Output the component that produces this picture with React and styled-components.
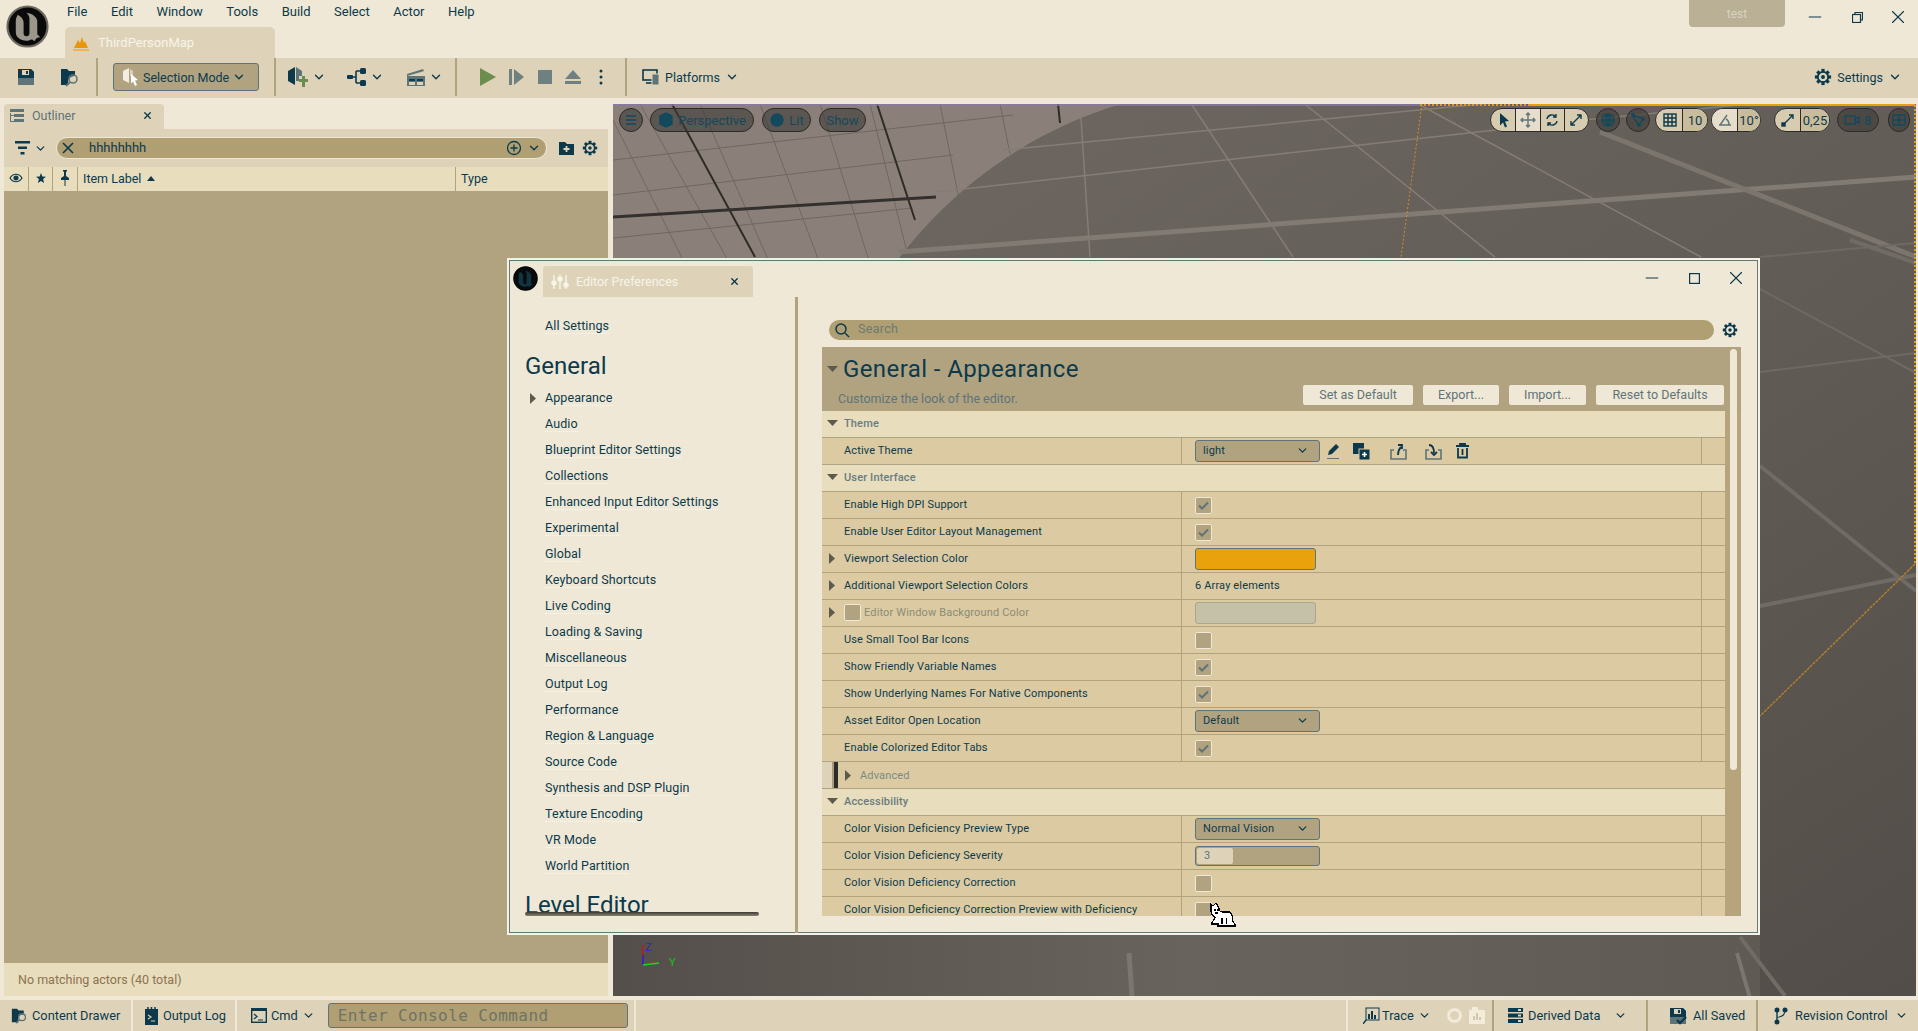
import React from "react";
import styled, { createGlobalStyle } from "styled-components";
import { ChevronDown, Minus, X } from "lucide-react";

const INK = "#0c3a4c";
const SLATE = "#5f7478";
const CREAM = "#efe8d6";
const SAND = "#ded3b8";
const PALE = "#e8ddbd";
const ROW = "#dbcaa2";
const KHAKI = "#b1a380";
const FIELD = "#af9f73";

const GlobalStyle = createGlobalStyle`
  html, body { margin: 0; padding: 0; overflow: hidden; background: ${CREAM}; }
  * { box-sizing: border-box; }
  body { font-family: Roboto, "Liberation Sans", sans-serif; color: ${INK}; }
`;

const Page = styled.div`
  position: relative;
  width: 1918px;
  height: 1031px;
  display: flex;
  flex-direction: column;
  overflow: hidden;
`;

const Nudge = styled.span`
  display: inline-flex;
  margin-left: ${(p) => p.$l || 0}px;
  margin-right: ${(p) => p.$r || 0}px;
`;

/* ---------- icons ---------- */

const Chevron = ({ size = 14, color = INK }) => <ChevronDown size={size} color={color} strokeWidth={2.4} />;

const GearIcon = ({ size = 18, color = INK }) => (
  <svg width={size} height={size} viewBox="0 0 20 20">
    <g fill={color}>
      {[0, 45, 90, 135, 180, 225, 270, 315].map((a) => (
        <rect key={a} x="8.2" y="1" width="3.6" height="4" transform={`rotate(${a} 10 10)`} />
      ))}
    </g>
    <circle cx="10" cy="10" r="5.8" fill="none" stroke={color} strokeWidth="2" />
    <circle cx="10" cy="10" r="2.2" fill={color} />
  </svg>
);

const UnrealMark = ({ size, ring, bright }) => (
  <svg width={size} height={size} viewBox="0 0 44 44">
    <circle cx="22" cy="22" r="20.5" fill="#0a0a0a" stroke={ring} strokeWidth="2.2" />
    <path
      d="M12 10C16 12 18 15 18 18V29C18 31 19 32 21 32C23 32 24 31 24 29V14C24 12 23 10 21 8C27 9 31 12 32 16V30L35 33C32 33 31 34 29 37C27 35 26 35 24 36C22 37 16 37 12 33C10 31 10 28 10 26V16C10 14 11 12 12 10Z"
      fill={bright}
    />
  </svg>
);

const SaveIcon = ({ check }) => (
  <svg width="18" height="18" viewBox="0 0 18 18">
    <path d="M1 1h13l3 3v13H1z" fill={SLATE} />
    <path d="M1 1h13l3 3v6H1z" fill={INK} />
    <rect x="5" y="2" width="7" height="5" fill={SAND} />
    <rect x="9" y="3" width="2" height="3" fill={INK} />
    {check && <path d="M8 13l3 3 6-6" fill="none" stroke={INK} strokeWidth="2.4" />}
  </svg>
);

const FolderSearchIcon = ({ size = 20 }) => (
  <svg width={size} height={size} viewBox="0 0 20 20">
    <path d="M1 2h6l2 2h6v5a6 6 0 0 0-6 9H1z" fill={INK} />
    <circle cx="13" cy="12" r="4" fill="none" stroke={SLATE} strokeWidth="1.6" />
    <path d="M10 15l-4 4" stroke={SLATE} strokeWidth="1.8" />
  </svg>
);

const SelectionIcon = () => (
  <svg width="18" height="20" viewBox="0 0 18 20">
    <path d="M7 1L1 4v9l6 3z" fill="#f3eee0" />
    <path d="M8 2l3 2v6l-3-1z" fill="#d8d2c2" />
    <path d="M9 7l7 6-3 .5 2 4.5-2 1-2-4.500-2 2z" fill="#fff" />
  </svg>
);

const AddActorIcon = () => (
  <svg width="22" height="24" viewBox="0 0 22 24">
    <path d="M8 2L1 6v10l7 4z" fill={INK} />
    <path d="M9 2l6 4v5h-3v5H9z" fill={SLATE} />
    <path d="M12 14h3v-3h3v3h3v3h-3v5h-3v-5h-3z" fill="#6b8e4e" />
  </svg>
);

const BlueprintIcon = () => (
  <svg width="20" height="20" viewBox="0 0 20 20">
    <path d="M5 10h4M9 4v12M9 4h4M9 16h4" stroke={INK} strokeWidth="1.6" fill="none" />
    <rect x="0" y="8" width="6" height="4" rx="1" fill={INK} />
    <rect x="13" y="1" width="6" height="6" rx="1.500" fill={INK} />
    <rect x="13" y="13" width="6" height="6" rx="1.500" fill={INK} />
  </svg>
);

const ClapperIcon = () => (
  <svg width="20" height="20" viewBox="0 0 20 20">
    <path d="M1 7l16-5 1 2-4 1.300L1 9z" fill={SLATE} />
    <path d="M1 9h18v10H1z" fill={SLATE} />
    <path d="M3 12h6v2H3zM11 12h6v2h-6z" fill={INK} />
    <path d="M3 15h6v3H3zM11 15h6v3h-6z" fill={SAND} />
  </svg>
);

const PlatformsIcon = () => (
  <svg width="18" height="18" viewBox="0 0 18 18">
    <rect x="1" y="2" width="14" height="10" fill="none" stroke={INK} strokeWidth="1.6" />
    <path d="M4 15h8" stroke={INK} strokeWidth="1.600" />
    <rect x="10" y="6" width="7" height="11" rx="1" fill={SLATE} stroke={SAND} />
  </svg>
);

const OutlinerIcon = () => (
  <svg width="16" height="16" viewBox="0 0 16 16" fill={SLATE}>
    <rect x="1" y="1" width="14" height="3" />
    <rect x="5" y="6" width="10" height="3" />
    <rect x="5" y="11" width="10" height="3" />
    <path d="M1 5h1v8h3v1H1zM2 7h3v1H2z" />
  </svg>
);

const TriRight = () => (
  <svg width="8" height="11" viewBox="0 0 8 11"><path d="M1 0l6 5.500-6 5.500z" fill="#5d5a4e" /></svg>
);
const TriDown = () => (
  <svg width="11" height="8" viewBox="0 0 11 8"><path d="M0 1h11L5.500 7z" fill="#5d5a4e" /></svg>
);

const CatCursor = () => (
  <svg width="30" height="26" viewBox="0 0 30 26" shapeRendering="crispEdges">
    <path
      d="M1 3l2 2 3-3 2 3 2 5 2 1h8l2 3 1 7 2 2v2H8v-2H2v-2l2-2 1-3-3-2-1-4z"
      fill="#fff"
      stroke="#000"
      strokeWidth="1.300"
    />
    <path d="M4 9h2M7 9h2M5 12h3M12 17v6M17 17l-1 6" stroke="#000" strokeWidth="1.100" fill="none" />
  </svg>
);

/* ---------- title bar ---------- */

const TitleBar = styled.header`
  height: 58px;
  display: flex;
  flex: none;
  background: ${CREAM};
`;

const LogoSlot = styled.div`
  width: 65px;
  flex: none;
  padding: 5px 0 0 6px;
`;

const TitleMiddle = styled.div`
  display: flex;
  flex-direction: column;
`;

const MenuRow = styled.nav`
  height: 27px;
  display: flex;
  align-items: flex-start;
  padding: 4px 0 0 2px;
`;

const MenuItem = styled.span`
  font-size: 13px;
  line-height: 16px;
  margin-right: 23.500px;
`;

const MapTab = styled.div`
  width: 210px;
  height: 31px;
  background: ${SAND};
  border-radius: 5px 5px 0 0;
  display: flex;
  align-items: center;
  gap: 9px;
  padding-left: 8px;
  color: #f7f3e8;
  font-size: 13px;
`;

const WindowArea = styled.div`
  margin-left: auto;
  display: flex;
  align-items: flex-start;
`;

const TestButton = styled.div`
  width: 96px;
  height: 27px;
  margin-right: 9px;
  background: #b9b096;
  border-radius: 0 0 4px 4px;
  color: #d8d2c0;
  font-size: 12px;
  display: flex;
  align-items: center;
  justify-content: center;
`;

const CtrlButton = styled.div`
  width: ${(p) => p.$w || 42}px;
  height: 34px;
  display: flex;
  align-items: center;
  justify-content: center;
`;

/* ---------- main toolbar ---------- */

const ToolBar = styled.div`
  height: 40px;
  flex: none;
  background: ${SAND};
  display: flex;
  align-items: center;
  padding-bottom: 2px;
`;

const ToolSlot = styled.div`
  width: ${(p) => p.$w}px;
  height: 100%;
  flex: none;
  display: flex;
  align-items: center;
  justify-content: ${(p) => (p.$pad ? "flex-start" : "center")};
  padding-left: ${(p) => p.$pad || 0}px;
  gap: ${(p) => p.$gap || 3}px;
  font-size: 12.500px;
`;

const ToolSep = styled.div`
  width: 2px;
  height: 38px;
  flex: none;
  background: ${KHAKI};
`;

const SelectionButton = styled.div`
  width: 146px;
  height: 28px;
  flex: none;
  margin: 0 15px;
  background: ${KHAKI};
  border: 1px solid ${SLATE};
  border-radius: 3px;
  display: flex;
  align-items: center;
  gap: 3px;
  padding-left: 8px;
  font-size: 12.500px;
`;

const SettingsSlot = styled.div`
  margin-left: auto;
  padding-right: 16px;
  display: flex;
  align-items: center;
  gap: 5px;
  font-size: 12.500px;
`;

/* ---------- main area ---------- */

const MainArea = styled.div`
  flex: 1;
  min-height: 0;
  display: flex;
  gap: 5px;
  padding: 6px 2px 4px 4px;
`;

const Outliner = styled.section`
  width: 604px;
  flex: none;
  display: flex;
  flex-direction: column;
`;

const PanelTab = styled.div`
  width: 160px;
  height: 25px;
  flex: none;
  background: ${SAND};
  border-radius: 4px 4px 0 0;
  display: flex;
  align-items: center;
  padding: 0 11px 2px 5px;
  gap: 7px;
  color: ${SLATE};
  font-size: 12.500px;
  & > :last-child { margin-left: auto; }
`;

const FilterBar = styled.div`
  height: 38px;
  flex: none;
  background: ${SAND};
  display: flex;
  align-items: center;
  padding: 0 8px 0 11px;
  gap: 4px;
`;

const FilterSearch = styled.div`
  width: 491px;
  height: 22px;
  margin: 0 7.500px 0 5px;
  background: ${FIELD};
  border: 1px solid ${CREAM};
  border-radius: 11px;
  display: flex;
  align-items: center;
  gap: 5px;
  font-size: 13px;
  padding: 0 5px 0 2px;
  & > :nth-child(2) { margin-left: 7px; flex: 1; padding-bottom: 2px; }
`;

const ColumnHeader = styled.div`
  height: 24px;
  flex: none;
  background: ${PALE};
  display: flex;
  align-items: stretch;
  font-size: 12.500px;
`;

const HeadCell = styled.div`
  width: ${(p) => (p.$w ? `${p.$w}px` : "auto")};
  flex: ${(p) => (p.$w ? "none" : 1)};
  display: flex;
  align-items: center;
  gap: 6px;
  justify-content: ${(p) => (p.$center ? "center" : "flex-start")};
  padding: 0 0 2px ${(p) => (p.$center ? 0 : 5)}px;
  border-right: 1px solid ${(p) => (p.$last ? "transparent" : KHAKI)};
`;

const TreeBody = styled.div`
  flex: 1;
  background: ${KHAKI};
`;

const PanelFooter = styled.div`
  height: 33px;
  flex: none;
  background: ${PALE};
  color: #8c7350;
  font-size: 12.500px;
  display: flex;
  align-items: center;
  padding-left: 14px;
`;

/* ---------- viewport ---------- */

const Viewport = styled.section`
  position: relative;
  flex: 1;
  overflow: hidden;
  background: #8a7f78;
`;

const Scene = styled.svg`
  display: block;
  width: 100%;
  height: 100%;
`;

const OverlayBar = styled.div`
  position: absolute;
  top: 4px;
  left: 6px;
  right: 6px;
  display: flex;
  align-items: center;
`;

const Pill = styled.div`
  height: 24px;
  width: ${(p) => p.$w}px;
  margin-left: ${(p) => p.$ml || 0}px;
  flex: none;
  border-radius: 12px;
  border: 1px solid #2d2b28;
  background: ${(p) => (p.$light ? "#d7ccaf" : "rgba(62,60,57,.62)")};
  color: #12495c;
  font-size: 13px;
  display: flex;
  align-items: center;
  justify-content: center;
  gap: ${(p) => (p.$light ? 0 : 4)}px;
  overflow: hidden;
`;

const PillCell = styled.div`
  flex: ${(p) => (p.$w ? "none" : 1)};
  width: ${(p) => (p.$w ? `${p.$w}px` : "auto")};
  height: 100%;
  display: flex;
  align-items: center;
  justify-content: center;
  color: ${INK};
  background: ${(p) => (p.$on ? "#e6decb" : p.$mid ? "#c9bc9c" : "transparent")};
  border-left: 1px solid ${(p) => (p.$first ? "transparent" : "#2d2b28")};
`;

const Spacer = styled.div`
  flex: 1;
`;

const GridLines = ({ d, w, c }) => <path d={d} stroke={c} strokeWidth={w} fill="none" />;

const ViewportScene = () => (
  <Scene viewBox="613 104 1303 892" preserveAspectRatio="none">
    <defs>
      <linearGradient id="floor" x1="0" y1="0" x2="1" y2="1">
        <stop offset="0" stopColor="#716a64" />
        <stop offset=".55" stopColor="#625c56" />
        <stop offset="1" stopColor="#524d48" />
      </linearGradient>
      <linearGradient id="floorLow" x1="0" y1="0" x2="1" y2="0">
        <stop offset="0" stopColor="#544f4a" />
        <stop offset=".5" stopColor="#69635d" />
        <stop offset="1" stopColor="#5f5a54" />
      </linearGradient>
    </defs>
    <rect x="613" y="104" width="1303" height="892" fill="#8b8079" />
    <GridLines c="#6f6760" w="1" d="M613 120l70 140M640 104l90 160M700 104l70 160M760 104l60 160M820 104l50 160M870 104l40 160M940 104l20 100M1000 104l10 50M613 160l400-45M613 195l340-40M613 238l300-30" />
    <GridLines c="#2e2b28" w="2" d="M672 104l83 153M877 104l38 116M1058 104l2 19" />
    <GridLines c="#33302d" w="3" d="M613 217l323-20" />
    <path d="M1121 104C1040 128 955 180 890 270V996H613V1000H1916V104z" fill="url(#floor)" />
    <rect x="613" y="935" width="1147" height="61" fill="url(#floorLow)" />
    <GridLines c="#857d75" w="1.500" d="M1081 118l9 139M1192 105l101 152M1306 105l189 152M1420 105l281 152M1003 150l500-48M936 192l560-62M1500 128l416-40" />
    <GridLines c="#827b74" w="5" d="M898 252l1018-75" />
    <GridLines c="#7c756e" w="5" d="M1600 132l316 125" />
    <GridLines c="#6f6963" w="2" d="M1760 372l156-19M1760 289l156 84M1760 257l156-14" />
    <GridLines c="#716b65" w="4" d="M1760 606l156-31M1760 466l156 125" />
    <GridLines c="#716b65" w="4" d="M1850 240l66 23M1740 937l45 59" />
    <GridLines c="#7d756f" w="5" d="M1129 953l3 43" />
    <GridLines c="#7d756f" w="4" d="M1737 953l23 80" />
    <path d="M1422 104L1401 257" stroke="#d08c2a" strokeWidth="1" strokeDasharray="2 2" fill="none" />
    <path d="M613 105H1420" stroke="#8a7aa8" strokeWidth="1.500" />
    <path d="M1420 105H1530" stroke="#d99a28" strokeWidth="2" strokeDasharray="2 2" />
    <path d="M1530 105H1915" stroke="#e8a00c" strokeWidth="2" />
    <path d="M1915 105V564" stroke="#d99a28" strokeWidth="2" strokeDasharray="2 2" />
    <path d="M1915 564L1760 716" stroke="#b5812c" strokeWidth="1.400" strokeDasharray="3 1" />
    <path d="M643 945v20" stroke="#c01818" strokeWidth="1.400" />
    <path d="M643 955v10" stroke="#2222dd" strokeWidth="1.400" />
    <path d="M643 965l16-2" stroke="#18d818" strokeWidth="1.500" />
    <text x="645" y="951" fontSize="11" fill="#2a2ac8" fontFamily="Roboto">Z</text>
    <text x="669" y="966" fontSize="11" fill="#18c018" fontFamily="Roboto">Y</text>
  </Scene>
);

const MiniIcon = ({ children, size = 16, color = INK }) => (
  <svg width={size} height={size} viewBox="0 0 16 16" fill="none" stroke={color} strokeWidth="1.400">{children}</svg>
);

const ViewportChrome = () => (
  <OverlayBar>
    <Pill $w={24}>
      <MiniIcon color="#12495c"><path d="M3 4h10M3 8h10M3 12h10" /></MiniIcon>
    </Pill>
    <Pill $w={104} $ml={7}>
      <MiniIcon color="#12495c"><path d="M8 1l6 3v8l-6 3-6-3V4z" fill="#12495c" /></MiniIcon>
      Perspective
    </Pill>
    <Pill $w={49} $ml={8}>
      <MiniIcon color="#12495c"><circle cx="8" cy="8" r="6" fill="#12495c" /></MiniIcon>
      Lit
    </Pill>
    <Pill $w={47} $ml={8}>Show</Pill>
    <Spacer />
    <Pill $w={99} $light>
      <PillCell $first>
        <svg width="12" height="16" viewBox="0 0 12 16"><path d="M2 1l9 8-4 .5 2 5-2 1-2-5-3 3z" fill={INK} /></svg>
      </PillCell>
      <PillCell $on>
        <MiniIcon color={SLATE}><path d="M8 1v14M1 8h14M6 3l2-2 2 2M6 13l2 2 2-2M3 6L1 8l2 2M13 6l2 2-2 2" /></MiniIcon>
      </PillCell>
      <PillCell>
        <MiniIcon><path d="M3 7a5 5 0 0 1 9-2M13 9a5 5 0 0 1-9 2M12 2v3H9M4 14v-3h3" /></MiniIcon>
      </PillCell>
      <PillCell>
        <MiniIcon><path d="M3 13L13 3M9 3h4v4M3 9v4h4" /></MiniIcon>
      </PillCell>
    </Pill>
    <Pill $w={24} $ml={7}>
      <MiniIcon color="#12495c"><circle cx="8" cy="8" r="6" /><path d="M2 8h12M8 2v12M8 2c-4 4-4 8 0 12M8 2c4 4 4 8 0 12" /></MiniIcon>
    </Pill>
    <Pill $w={24} $ml={6}>
      <MiniIcon color="#12495c"><path d="M3 3l10 4-4 6-4-5zM2 2h2v2H2zM12 6h2v2h-2zM8 12h2v2H8z" /></MiniIcon>
    </Pill>
    <Pill $w={53} $ml={5} $light>
      <PillCell $first $w={26}>
        <MiniIcon><rect x="2" y="2" width="12" height="12" /><path d="M6 2v12M10 2v12M2 6h12M2 10h12" /></MiniIcon>
      </PillCell>
      <PillCell $mid>10</PillCell>
    </Pill>
    <Pill $w={50} $ml={3} $light>
      <PillCell $first $on $w={25}>
        <MiniIcon color={SLATE}><path d="M2 13h12M3 13l7-10M9 7c2 1 3 3 3 6" /></MiniIcon>
      </PillCell>
      <PillCell $mid>10°</PillCell>
    </Pill>
    <Pill $w={56} $ml={13} $light>
      <PillCell $first $w={25}>
        <MiniIcon><path d="M4 12L13 3M9 3h4v4" /><rect x="2" y="11" width="3" height="3" fill={INK} /></MiniIcon>
      </PillCell>
      <PillCell $mid>0,25</PillCell>
    </Pill>
    <Pill $w={42} $ml={7}>
      <MiniIcon color="#12495c"><rect x="1" y="4" width="10" height="8" /><path d="M11 7l4-2v6l-4-2" /></MiniIcon>
      8
    </Pill>
    <Pill $w={22} $ml={9}>
      <MiniIcon color="#12495c"><rect x="2" y="3" width="12" height="10" rx="1" /><path d="M2 8h12M8 3v10" /></MiniIcon>
    </Pill>
  </OverlayBar>
);

/* ---------- status bar ---------- */

const StatusBar = styled.footer`
  height: 31px;
  flex: none;
  display: flex;
  font-size: 12.800px;
  background: ${SAND};
`;

const StatusCell = styled.div`
  width: ${(p) => p.$w}px;
  flex: none;
  padding-left: ${(p) => p.$pad}px;
  display: flex;
  align-items: center;
  gap: ${(p) => p.$gap || 4}px;
  border-right: 2px solid ${(p) => (p.$none ? "transparent" : p.$tan ? KHAKI : CREAM)};
  border-left: ${(p) => (p.$edge ? `2px solid ${CREAM}` : "none")};
  margin-right: ${(p) => p.$mr || 0}px;
`;

const ConsoleInput = styled.div`
  width: 300px;
  height: 25px;
  margin-left: 9px;
  background: ${FIELD};
  border: 1px solid ${SLATE};
  border-radius: 3px;
  display: flex;
  align-items: center;
  padding-left: 9px;
  font-family: "DejaVu Sans Mono", "Liberation Mono", monospace;
  font-size: 16px;
  letter-spacing: .4px;
  color: #6f7363;
  white-space: nowrap;
`;

/* ---------- preferences window ---------- */

const PrefsWindow = styled.div`
  position: absolute;
  left: 507px;
  top: 258px;
  width: 1253px;
  height: 677px;
  background: ${CREAM};
  border: 2px solid #f6f1e4;
  outline: 1px solid #5f7a78;
  outline-offset: -3px;
  display: flex;
  flex-direction: column;
  overflow: hidden;
`;

const PrefsTitle = styled.div`
  height: 37px;
  flex: none;
  display: flex;
  padding: 6px 0 0 4px;
`;

const PrefsTab = styled.div`
  width: 210px;
  height: 31px;
  margin-left: 5px;
  background: ${SAND};
  border-radius: 3px 3px 0 0;
  display: flex;
  align-items: center;
  gap: 7px;
  padding: 0 13px 0 8px;
  color: #f7f3e8;
  font-size: 12.500px;
  & > :last-child { margin-left: auto; }
`;

const PrefsControls = styled.div`
  margin: -5px 0 0 auto;
  display: flex;
  padding-right: 1px;
`;

const PrefsBody = styled.div`
  flex: 1;
  min-height: 0;
  display: flex;
`;

const SideNav = styled.nav`
  position: relative;
  width: 289px;
  height: 638px;
  flex: none;
  padding-top: 16px;
  border-right: 3px solid ${KHAKI};
`;

const NavInner = styled.div`
  padding-left: 36px;
  height: 605px;
  overflow: hidden;
`;

const NavHeading = styled.h2`
  margin: 0 0 0 -20px;
  padding-top: ${(p) => (p.$cut ? 12 : 8)}px;
  height: ${(p) => (p.$cut ? 40 : 46)}px;
  font-size: 24px;
  line-height: ${(p) => (p.$cut ? 28 : 38)}px;
  font-weight: 400;
`;

const NavItem = styled.div`
  position: relative;
  height: 26px;
  display: flex;
  align-items: center;
  font-size: 12.500px;
  letter-spacing: .1px;
  & > span {
    border-bottom: 1px dotted #fbf8ef;
    line-height: 15px;
  }
`;

const NavArrow = styled.div`
  position: absolute;
  left: -16px;
  top: 8px;
  display: flex;
`;

const NavShadow = styled.div`
  position: absolute;
  left: 16px;
  right: 36px;
  top: 615px;
  height: 4px;
  background: linear-gradient(#3d3a34, #8b8270);
  border-radius: 2px;
`;

const DetailPane = styled.div`
  flex: 1;
  min-width: 0;
  padding: 23px 17px 0 24px;
  display: flex;
  flex-direction: column;
`;

const SearchRow = styled.div`
  height: 20px;
  flex: none;
  display: flex;
  align-items: center;
  padding-left: 7px;
  gap: 8px;
`;

const SearchBox = styled.div`
  width: 885px;
  height: 20px;
  background: ${FIELD};
  border-radius: 10px;
  display: flex;
  align-items: center;
  gap: 8px;
  padding-left: 5px;
  color: #6d7a72;
  font-size: 12.500px;
  letter-spacing: .3px;
`;

const SearchHint = styled.span`
  padding-bottom: 3px;
`;

const DetailStack = styled.div`
  position: relative;
  margin-top: 7px;
  flex: none;
`;

const DetailHeader = styled.div`
  height: 64px;
  background: ${KHAKI};
  padding-right: 17px;
`;

const HeaderTop = styled.div`
  height: 38px;
  display: flex;
  align-items: center;
  gap: 5px;
  padding: 5px 0 0 5px;
  font-size: 24px;
  letter-spacing: .4px;
`;

const HeaderBottom = styled.div`
  height: 20px;
  display: flex;
  align-items: center;
  padding-left: 16px;
  color: ${SLATE};
  font-size: 12.500px;
`;

const HeaderHint = styled.span`
  padding-top: 7px;
`;

const HeaderActions = styled.div`
  margin-left: auto;
  display: flex;
  gap: 10px;
`;

const ActionButton = styled.div`
  width: ${(p) => p.$w}px;
  height: 20px;
  padding-bottom: 2px;
  background: ${CREAM};
  border-radius: 2px;
  color: ${SLATE};
  font-size: 12.500px;
  display: flex;
  align-items: center;
  justify-content: center;
`;

const RowsArea = styled.div`
  height: 505px;
  background: #b5a47c;
  padding-right: 16px;
  overflow: hidden;
`;

const Scroller = styled.div`
  position: absolute;
  right: 4px;
  top: 2px;
  width: 7px;
  height: 421px;
  background: ${CREAM};
  border-radius: 4px;
`;

const RowShell = styled.div`
  height: 27px;
  display: flex;
  align-items: stretch;
  background: ${(p) => (p.$section ? PALE : ROW)};
  border-bottom: 1px solid ${KHAKI};
  font-size: 11px;
  letter-spacing: .15px;
  white-space: nowrap;
`;

const NameCell = styled.div`
  width: 360px;
  flex: none;
  display: flex;
  align-items: center;
  padding-bottom: 2px;
  border-right: 1px solid ${KHAKI};
  color: ${(p) => (p.$dim ? "#8b8c77" : INK)};
`;

const SectionName = styled.div`
  display: flex;
  align-items: center;
  padding-bottom: 2px;
  font-weight: 500;
  color: #687c80;
`;

const Twist = styled.div`
  width: 22px;
  flex: none;
  display: flex;
  justify-content: center;
  padding-right: 2px;
`;

const ValueCell = styled.div`
  width: 520px;
  flex: none;
  display: flex;
  align-items: center;
  padding-left: 13px;
  border-right: 1px solid ${KHAKI};
`;

const ValueText = styled.span`
  padding-bottom: 2px;
`;

const Check = styled.div`
  width: 17px;
  height: 17px;
  flex: none;
  margin-right: ${(p) => p.$mr || 0}px;
  background: ${KHAKI};
  border: 1px solid ${CREAM};
  border-radius: 2px;
  display: flex;
  align-items: center;
  justify-content: center;
`;

const Dropdown = styled.div`
  width: 125px;
  height: 22px;
  background: ${KHAKI};
  border: 1px solid ${SLATE};
  border-radius: 3px;
  display: flex;
  align-items: center;
  justify-content: space-between;
  padding: 0 10px 1px 7px;
`;

const Swatch = styled.div`
  width: 121px;
  height: 22px;
  background: ${(p) => p.$color};
  border: 1px solid ${(p) => p.$edge};
  border-radius: 3px;
`;

const SliderField = styled.div`
  width: 125px;
  height: 20px;
  background: ${KHAKI};
  border: 1px solid ${SLATE};
  border-radius: 3px;
  padding: 1px;
`;

const SliderFill = styled.div`
  height: 100%;
  background: ${SAND};
  border-radius: 2px;
  color: ${SLATE};
  padding-left: 7px;
  line-height: 16px;
`;

const IconSlot = styled.div`
  width: ${(p) => p.$w}px;
  flex: none;
  display: flex;
  justify-content: center;
`;

const AdvancedName = styled.div`
  display: flex;
  align-items: center;
  color: #7b8a84;
`;

const AdvancedBand = styled.div`
  width: 16px;
  height: 100%;
  flex: none;
  background: linear-gradient(90deg, ${SAND} 0 62%, #a89c80 62% 78%, #2c2c28 78% 100%);
`;

const CatSpot = styled.div`
  position: absolute;
  left: 1210px;
  top: 901px;
  display: flex;
`;

const CheckMark = () => (
  <svg width="11" height="9" viewBox="0 0 11 9"><path d="M1 4.500l3 3 6-6" fill="none" stroke={SLATE} strokeWidth="2" /></svg>
);

const NAV_TOP = ["Audio", "Blueprint Editor Settings", "Collections", "Enhanced Input Editor Settings", "Experimental", "Global", "Keyboard Shortcuts", "Live Coding", "Loading & Saving", "Miscellaneous", "Output Log", "Performance", "Region & Language", "Source Code", "Synthesis and DSP Plugin", "Texture Encoding", "VR Mode", "World Partition"];

const ThemeTools = () => (
  <>
    <IconSlot $w={26}>
      <svg width="15" height="16" viewBox="0 0 15 16" fill={INK}>
        <path d="M10 1l3 3-7 7-4 1 1-4z" /><path d="M1 15h12v1H1z" fill={SLATE} />
      </svg>
    </IconSlot>
    <IconSlot $w={30}>
      <svg width="17" height="17" viewBox="0 0 17 17">
        <rect x="0" y="0" width="11" height="11" fill={INK} />
        <rect x="6" y="6" width="11" height="11" fill={INK} stroke={ROW} />
        <path d="M9 11.500h5M11.500 9v5" stroke="#fff" strokeWidth="1.600" />
      </svg>
    </IconSlot>
    <IconSlot $w={44}>
      <svg width="17" height="17" viewBox="0 0 17 17" fill="none">
        <path d="M4 7H1v9h15V7h-3" stroke={SLATE} strokeWidth="1.600" />
        <path d="M8 12C8 8 9 6 11 4M8 2l4 0v4" stroke={INK} strokeWidth="1.800" />
      </svg>
    </IconSlot>
    <IconSlot $w={26}>
      <svg width="17" height="17" viewBox="0 0 17 17" fill="none">
        <path d="M4 7H1v9h15V7h-3" stroke={SLATE} strokeWidth="1.600" />
        <path d="M4 2c4 0 5 3 5 8M6 9l3 3 3-3" stroke={INK} strokeWidth="1.800" />
      </svg>
    </IconSlot>
    <IconSlot $w={32}>
      <svg width="15" height="16" viewBox="0 0 15 16" fill="none" stroke={INK} strokeWidth="1.800">
        <path d="M1 3h13M5 3V1h5v2M3 5v9.500h9V5M7.500 6v6" />
      </svg>
    </IconSlot>
  </>
);

const Row = ({ name, twist, dim, toggle, children }) => (
  <RowShell>
    <NameCell $dim={dim}>
      <Twist>{twist && <TriRight />}</Twist>
      {toggle && <Check $mr={3} />}
      {name}
    </NameCell>
    <ValueCell>{children}</ValueCell>
  </RowShell>
);

const Section = ({ name }) => (
  <RowShell $section>
    <SectionName>
      <Twist><TriDown /></Twist>
      {name}
    </SectionName>
  </RowShell>
);

const Checked = () => <Check><CheckMark /></Check>;

const Select = ({ label }) => (
  <Dropdown>
    {label}
    <Chevron size={13} />
  </Dropdown>
);

const SettingsRows = () => (
  <>
    <Section name="Theme" />
    <Row name="Active Theme">
      <Select label="light" />
      <ThemeTools />
    </Row>
    <Section name="User Interface" />
    <Row name="Enable High DPI Support"><Checked /></Row>
    <Row name="Enable User Editor Layout Management"><Checked /></Row>
    <Row name="Viewport Selection Color" twist><Swatch $color="#e9a10c" $edge={SLATE} /></Row>
    <Row name="Additional Viewport Selection Colors" twist><ValueText>6 Array elements</ValueText></Row>
    <Row name="Editor Window Background Color" twist dim toggle><Swatch $color="#c5c0a8" $edge="#a9a78e" /></Row>
    <Row name="Use Small Tool Bar Icons"><Check /></Row>
    <Row name="Show Friendly Variable Names"><Checked /></Row>
    <Row name="Show Underlying Names For Native Components"><Checked /></Row>
    <Row name="Asset Editor Open Location"><Select label="Default" /></Row>
    <Row name="Enable Colorized Editor Tabs"><Checked /></Row>
    <RowShell>
      <AdvancedName>
        <AdvancedBand />
        <Twist><TriRight /></Twist>
        Advanced
      </AdvancedName>
    </RowShell>
    <Section name="Accessibility" />
    <Row name="Color Vision Deficiency Preview Type"><Select label="Normal Vision" /></Row>
    <Row name="Color Vision Deficiency Severity">
      <SliderField><SliderFill style={{ width: "30%" }}>3</SliderFill></SliderField>
    </Row>
    <Row name="Color Vision Deficiency Correction"><Check /></Row>
    <Row name="Color Vision Deficiency Correction Preview with Deficiency"><Check /></Row>
  </>
);

const PrefsDialog = () => (
  <PrefsWindow>
    <PrefsTitle>
      <UnrealMark size={25} ring="#050505" bright="#0f3442" />
      <PrefsTab>
        <svg width="18" height="16" viewBox="0 0 18 16" stroke="#f7f3e8" strokeWidth="1.500" fill="#f7f3e8">
          <path d="M3 1v14M9 1v14M15 1v14" />
          <circle cx="3" cy="9" r="2" /><circle cx="9" cy="5" r="2" /><circle cx="15" cy="11" r="2" />
        </svg>
        Editor Preferences
        <X size={11} color={INK} strokeWidth={3} />
      </PrefsTab>
      <PrefsControls>
        <CtrlButton><Minus size={20} color={INK} strokeWidth={1.2} /></CtrlButton>
        <CtrlButton>
          <svg width="11" height="11" viewBox="0 0 11 11"><rect x=".5" y=".5" width="10" height="10" fill="none" stroke={INK} strokeWidth="1.400" /></svg>
        </CtrlButton>
        <CtrlButton><X size={22} color={INK} strokeWidth={1.2} /></CtrlButton>
      </PrefsControls>
    </PrefsTitle>
    <PrefsBody>
      <SideNav>
        <NavInner>
          <NavItem><span>All Settings</span></NavItem>
          <NavHeading>General</NavHeading>
          <NavItem>
            <NavArrow><TriRight /></NavArrow>
            <span>Appearance</span>
          </NavItem>
          {NAV_TOP.map((n) => <NavItem key={n}><span>{n}</span></NavItem>)}
          <NavHeading $cut>Level Editor</NavHeading>
        </NavInner>
        <NavShadow />
      </SideNav>
      <DetailPane>
        <SearchRow>
          <SearchBox>
            <svg width="16" height="16" viewBox="0 0 16 16" fill="none" stroke={INK} strokeWidth="1.500">
              <circle cx="7" cy="7" r="5" /><path d="M11 11l4 4" />
            </svg>
            <SearchHint>Search</SearchHint>
          </SearchBox>
          <GearIcon size={16} />
        </SearchRow>
        <DetailStack>
          <DetailHeader>
            <HeaderTop>
              <TriDown />
              General - Appearance
            </HeaderTop>
            <HeaderBottom>
              <HeaderHint>Customize the look of the editor.</HeaderHint>
              <HeaderActions>
                <ActionButton $w={110}>Set as Default</ActionButton>
                <ActionButton $w={76}>Export...</ActionButton>
                <ActionButton $w={77}>Import...</ActionButton>
                <ActionButton $w={128}>Reset to Defaults</ActionButton>
              </HeaderActions>
            </HeaderBottom>
          </DetailHeader>
          <RowsArea>
            <SettingsRows />
          </RowsArea>
          <Scroller />
        </DetailStack>
      </DetailPane>
    </PrefsBody>
  </PrefsWindow>
);

const MENU = ["File", "Edit", "Window", "Tools", "Build", "Select", "Actor", "Help"];

export default function App() {
  return (
    <Page>
      <GlobalStyle />
      <TitleBar>
        <LogoSlot><UnrealMark size={43} ring="#6e6a60" bright="#9a968a" /></LogoSlot>
        <TitleMiddle>
          <MenuRow>
            {MENU.map((m) => <MenuItem key={m}>{m}</MenuItem>)}
          </MenuRow>
          <MapTab>
            <svg width="16" height="16" viewBox="0 0 16 16">
              <path d="M1 13L5 5l2 3 2-6 2 6 1-2 3 7z" fill="#e8960c" />
              <rect x="0" y="14" width="16" height="2" fill="#efb45a" />
            </svg>
            ThirdPersonMap
          </MapTab>
        </TitleMiddle>
        <WindowArea>
          <TestButton>test</TestButton>
          <CtrlButton><Minus size={20} color={INK} strokeWidth={1.2} /></CtrlButton>
          <CtrlButton>
            <svg width="11" height="11" viewBox="0 0 11 11" fill="none" stroke={INK} strokeWidth="1.200">
              <rect x=".5" y="2.500" width="8" height="8" /><path d="M3 2.500V.5h7.500V8H8.500" />
            </svg>
          </CtrlButton>
          <CtrlButton $w={40}><X size={22} color={INK} strokeWidth={1.2} /></CtrlButton>
        </WindowArea>
      </TitleBar>

      <ToolBar>
        <ToolSlot $w={52}><SaveIcon /></ToolSlot>
        <ToolSlot $w={36}><FolderSearchIcon /></ToolSlot>
        <ToolSlot $w={8} />
        <ToolSep />
        <SelectionButton><SelectionIcon />Selection Mode<Chevron /></SelectionButton>
        <ToolSep />
        <ToolSlot $w={60}><AddActorIcon /><Chevron /></ToolSlot>
        <ToolSlot $w={58}><BlueprintIcon /><Chevron /></ToolSlot>
        <ToolSlot $w={61}><ClapperIcon /><Chevron /></ToolSlot>
        <ToolSep />
        <ToolSlot $w={16} />
        <ToolSlot $w={30}>
          <svg width="18" height="20" viewBox="0 0 18 20"><path d="M1 1l16 9-16 9z" fill="#6b8e4e" /></svg>
        </ToolSlot>
        <ToolSlot $w={28}>
          <svg width="16" height="16" viewBox="0 0 16 16" fill="#6e8080"><rect x="0" y="0" width="3" height="16" /><path d="M5 0l10 8-10 8z" /></svg>
        </ToolSlot>
        <ToolSlot $w={28}>
          <svg width="14" height="14" viewBox="0 0 14 14"><rect width="14" height="14" fill="#6e8080" /></svg>
        </ToolSlot>
        <ToolSlot $w={28}>
          <svg width="16" height="16" viewBox="0 0 16 16" fill="#6e8080"><path d="M8 1l8 9H0z" /><rect y="12" width="16" height="3" /></svg>
        </ToolSlot>
        <ToolSlot $w={28}>
          <svg width="4" height="16" viewBox="0 0 4 16" fill={INK}><circle cx="2" cy="2" r="1.500" /><circle cx="2" cy="8" r="1.500" /><circle cx="2" cy="14" r="1.500" /></svg>
        </ToolSlot>
        <ToolSlot $w={10} />
        <ToolSep />
        <ToolSlot $w={125} $gap={5} $pad={15}>
          <PlatformsIcon />Platforms<Chevron />
        </ToolSlot>
        <SettingsSlot><GearIcon />Settings<Chevron /></SettingsSlot>
      </ToolBar>

      <MainArea>
        <Outliner>
          <PanelTab>
            <OutlinerIcon />
            Outliner
            <X size={11} color={INK} strokeWidth={3} />
          </PanelTab>
          <FilterBar>
            <svg width="15" height="14" viewBox="0 0 15 14" fill={INK}><rect width="15" height="2.500" /><rect x="3" y="5.500" width="9" height="2.500" /><rect x="5.500" y="11" width="4" height="2.500" /></svg>
            <Chevron size={13} />
            <FilterSearch>
              <X size={18} color={INK} strokeWidth={2.200} />
              <span>hhhhhhhh</span>
              <svg width="16" height="16" viewBox="0 0 16 16" fill="none" stroke={INK} strokeWidth="1.300"><circle cx="8" cy="8" r="6.500" /><path d="M8 4.500v7M4.500 8h7" /></svg>
              <Chevron size={14} />
            </FilterSearch>
            <svg width="15" height="13" viewBox="0 0 15 13">
              <path d="M0 0h6l2 2h7v11H0z" fill={INK} /><path d="M7.500 4v6M4.500 7h6" stroke={SAND} strokeWidth="1.800" />
            </svg>
            <Nudge $l={4}><GearIcon size={16} /></Nudge>
          </FilterBar>
          <ColumnHeader>
            <HeadCell $w={25} $center>
              <svg width="14" height="10" viewBox="0 0 14 10" fill="none" stroke={INK} strokeWidth="1.200"><path d="M1 5c3-5 9-5 12 0-3 5-9 5-12 0z" /><circle cx="7" cy="5" r="2" fill={INK} /></svg>
            </HeadCell>
            <HeadCell $w={24} $center>
              <svg width="10" height="10" viewBox="0 0 10 10"><path d="M5 0l1.300 3.400L10 3.800 7.100 6.100 8.100 10 5 7.900 1.900 10l1-3.900L0 3.800l3.700-.4z" fill={INK} /></svg>
            </HeadCell>
            <HeadCell $w={25} $center>
              <svg width="10" height="16" viewBox="0 0 10 16" fill={INK}><path d="M3 0h4v1L6 2v4l3 2v2H5.500v6h-1v-6H1V8l3-2V2L3 1z" /></svg>
            </HeadCell>
            <HeadCell $w={378}>
              Item Label
              <svg width="8" height="5" viewBox="0 0 8 5"><path d="M0 5l4-5 4 5z" fill={INK} /></svg>
            </HeadCell>
            <HeadCell $last>Type</HeadCell>
          </ColumnHeader>
          <TreeBody />
          <PanelFooter>No matching actors (40 total)</PanelFooter>
        </Outliner>
        <Viewport>
          <ViewportScene />
          <ViewportChrome />
        </Viewport>
      </MainArea>

      <StatusBar>
        <StatusCell $w={133} $pad={11}><FolderSearchIcon size={17} />Content Drawer</StatusCell>
        <StatusCell $w={104} $pad={12} $gap={5}>
          <svg width="13" height="18" viewBox="0 0 13 18"><path d="M0 2h13v16H0z" fill={INK} /><path d="M3 0v3M6.500 0v3M10 0v3" stroke={INK} strokeWidth="1.500" /><path d="M3 8l3 2-3 2M6 14h4" stroke={SAND} strokeWidth="1.200" fill="none" /></svg>
          Output Log
        </StatusCell>
        <StatusCell $w={399} $pad={14}>
          <svg width="16" height="15" viewBox="0 0 16 15" fill="none"><rect x=".7" y=".7" width="14.600" height="13.600" stroke={INK} strokeWidth="1.400" /><rect y="0" width="16" height="3" fill={INK} /><path d="M3 6l3 2.500L3 11M7 12h5" stroke={INK} strokeWidth="1.200" /></svg>
          Cmd
          <Chevron size={13} />
          <ConsoleInput>Enter Console Command</ConsoleInput>
        </StatusCell>
        <Spacer />
        <StatusCell $w={148} $pad={15} $gap={2} $tan $edge>
          <svg width="17" height="17" viewBox="0 0 17 17" fill="none" stroke={INK}><rect x="3" y="1" width="13" height="12" strokeWidth="1" /><path d="M3 13l-3 4" strokeWidth="1.400" /><path d="M6 12V7M9 12V4M12 12V8" strokeWidth="2" /></svg>
          Trace
          <Nudge $l={2}><Chevron size={13} /></Nudge>
          <Nudge $l={13}>
            <svg width="17" height="17" viewBox="0 0 17 17"><circle cx="8.500" cy="8.500" r="7.500" fill="#f3ecdb" stroke="#e8dfc8" /><circle cx="8.500" cy="8.500" r="4.500" fill={SAND} /></svg>
          </Nudge>
          <Nudge $l={4}>
            <svg width="16" height="17" viewBox="0 0 16 17"><rect y="3" width="16" height="14" fill="#f3ecdb" /><rect x="3" y="0" width="6" height="3" fill="#f3ecdb" /><path d="M5 13V9M8 13V6M11 13V10" stroke="#cdc2a6" strokeWidth="1.800" /></svg>
          </Nudge>
        </StatusCell>
        <StatusCell $w={154} $pad={14} $tan $mr={8} $gap={5}>
          <svg width="15" height="15" viewBox="0 0 15 15" fill={INK}><rect width="15" height="4" /><rect y="5.500" width="15" height="4" /><rect y="11" width="15" height="4" /><path d="M10 1h3v2h-3zM10 6.500h3v2h-3zM10 12h3v2h-3z" fill={SAND} /></svg>
          Derived Data
          <Nudge $l={9}><Chevron size={13} /></Nudge>
        </StatusCell>
        <StatusCell $w={102} $pad={13} $tan $gap={6}>
          <SaveIcon check />
          All Saved
        </StatusCell>
        <StatusCell $w={160} $pad={16} $gap={7} $none>
          <svg width="14" height="18" viewBox="0 0 14 18" fill={INK}><circle cx="3" cy="3" r="2.500" /><circle cx="11" cy="3" r="2.500" /><circle cx="3" cy="15" r="2.500" /><path d="M2.300 3h1.400v10H2.300zM11 5c0 4-3 5-8 6v-1c4-1 7-2 7-5z" /></svg>
          Revision Control
          <Chevron size={13} />
        </StatusCell>
      </StatusBar>

      <PrefsDialog />
      <CatSpot><CatCursor /></CatSpot>
    </Page>
  );
}
